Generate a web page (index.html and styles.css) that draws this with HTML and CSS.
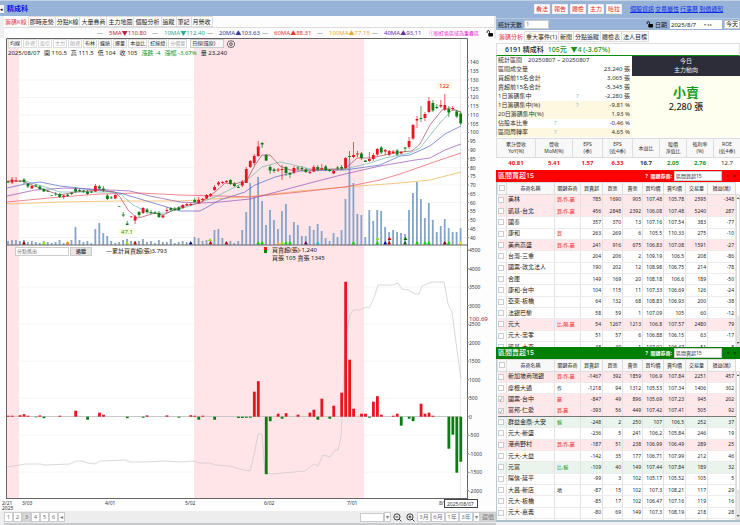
FILE: index.html
```html
<!DOCTYPE html>
<html lang="zh-Hant">
<head>
<meta charset="utf-8">
<meta name="viewport" content="width=device-width">
<title>精成科</title>
<link rel="stylesheet" href="styles.css">
</head>
<body>
<div class="app">
  <main class="left">
    <header class="titlebar"><span class="collapse">◂</span><h1>精成科</h1></header>
    <nav class="tabs">
      <a class="active" href="#k">籌碼K線</a><a href="#t">即時走勢</a><a href="#b">分點K線</a><a href="#q">大量券商</a><a href="#m">主力地圖</a><a href="#a">個股分析</a><a href="#f">追蹤</a><a href="#n">筆記</a><a href="#r">月營收</a>
    </nav>
    <div class="legend">
      <div class="ma">
        <span class="m5"><i>—</i>5MA▼110.80</span>
        <span class="m10"><i>—</i>10MA▼112.40</span>
        <span class="m20"><i>—</i>20MA▲103.63</span>
        <span class="m60"><i>—</i>60MA▲88.31</span>
        <span class="m100"><i>—</i>100MA▲77.15</span>
        <span class="m40"><i>—</i>40MA▲93.11</span>
      </div>
      <span class="hint">ⓘ粉紅色區域為重疊區</span>
      <svg class="lock" viewBox="0 0 12 12"><path d="M2 5V3a2 2 0 0 1 4 0v2" fill="none" stroke="#000" stroke-width="1.5"/><rect x="4" y="5" width="8" height="6" rx="1"/></svg>
    </div>
    <section class="chart">
      <svg id="plot" viewBox="0 38 496 473" role="img" aria-label="K線圖"></svg>
      <div class="toolbar">
        <button>均線</button><button class="off">外資</button><button class="off">投信</button><button class="off">主力</button><button class="off">融資</button><button>布林</button><button>纏繞</button><button>爆量</button><button>本益比</button><button>紅綠燈</button><button class="off">分價量</button>
        <select aria-label="週期"><option>日線(還原)</option></select>
        <svg class="gear" viewBox="0 0 16 16"><path d="M8 1l2 1.5 2.5-.3 1 2.3 2 1.5-.8 2.3.8 2.2-2 1.5-1 2.3-2.5-.3L8 15.5 6 14l-2.5.3-1-2.3-2-1.5.8-2.2L.5 6l2-1.5 1-2.3 2.5.3z" fill="none" stroke="#222" stroke-width="1.3"/><circle cx="8" cy="8.2" r="2.7" fill="none" stroke="#222" stroke-width="1.5"/></svg>
      </div>
      <p class="quote"><span>2025/08/07</span> <span>開 110.5</span> <span>高 111.5</span> <span>低 104</span> <span>收 105</span> <span class="down">漲跌 -4</span> <span class="down">漲幅 -3.67%</span> <span>量 23,240</span></p>
      <div class="subbar">
        <select aria-label="指標"><option>分點進出</option></select><button>追蹤</button>
        <span class="cum">—累計買賣超(張)3,793</span>
      </div>
      <div class="net"><i></i><p>買賣超(張)-1,240<br>買張 105 賣張 1345</p></div>
    </section>
    <footer class="bottombar">
      <div class="pages"><button>1</button><button>2</button><button class="on">3</button><button>4</button><button>5</button><button>6</button><button>◂</button></div>
      <div class="range">
        <input type="text" aria-label="範圍"><button>▾</button>
        <svg viewBox="0 0 16 16"><circle cx="7" cy="7" r="5.5"/><path d="M11 11l4 4M4.5 7h5"/></svg>
        <svg viewBox="0 0 16 16"><circle cx="7" cy="7" r="5.5"/><path d="M11 11l4 4M4.5 7h5M7 4.5v5"/></svg>
        <button>3月</button><button>6月</button><button>1年</button><button>3年</button><button>▾</button><button class="on">還價</button>
      </div>
    </footer>
  </main>
  <aside class="right">
    <header class="quick">
      <button>看法</button><button>報告</button><button>體檢</button><button>主力</button><button>哈拉</button>
      <nav><a href="#i">個股資訊</a><a href="#x">交易屬性</a><a href="#c">行事曆</a><a href="#p">到價通知</a></nav>
    </header>
    <div class="days">
      <label for="days">統計天數</label><select id="days"><option>1</option></select>
      <svg class="lock" viewBox="0 0 12 12"><path d="M2 5V3a2 2 0 0 1 4 0v2" fill="none" stroke="#000" stroke-width="1.5"/><rect x="4" y="5" width="8" height="6" rx="1"/></svg>
      <label for="date">日期</label><input id="date" type="text" value="2025/8/7"><span class="steps">▾ ◂ ▸</span><button>今天</button>
    </div>
    <nav class="tabs rtabs"><a class="active" href="#s">籌碼分析</a><a href="#e">重大事件(1)</a><a href="#w">新聞</a><a href="#z">分點追蹤</a><a href="#h">體檢表</a><a href="#l">法人目標</a></nav>
    <h2 class="stock">6191 精成科 <span>105元</span> <span>▼4 (-3.67%)</span></h2>
    <div class="summary">
      <dl>
        <div><dt>統計區間</dt><dd class="period">20250807 ~ 20250807</dd></div>
        <div><dt>區間成交量</dt><dd>23,240 張</dd></div>
        <div><dt>買超前15名合計</dt><dd>3,065 張</dd></div>
        <div><dt>賣超前15名合計</dt><dd>-5,345 張</dd></div>
        <div><dt>1日籌碼集中</dt><b>?</b><dd>-2,280 張</dd></div>
        <div class="hl"><dt>1日籌碼集中(%)</dt><b>?</b><dd>-9.81 %</dd></div>
        <div class="hl"><dt>20日籌碼集中(%)</dt><dd>1.93 %</dd></div>
        <div><dt>佔股本比重</dt><b class="near">?</b><dd>-0.46 %</dd></div>
        <div class="hl"><dt>區間周轉率</dt><b class="near">?</b><dd>4.65 %</dd></div>
      </dl>
      <div class="trend">
        <p class="cap">今日<br>主力動向</p>
        <p class="big">小賣</p><p class="amt">2,280 張</p>
      </div>
    </div>
    <table class="ratios">
      <colgroup><col class="r1"><col class="r2"><col class="r3"><col class="r3"><col class="r4"><col class="r4"><col class="r4"><col class="r4"></colgroup>
      <thead><tr><th>累計營收<br>YoY(%)</th><th>營收<br>MoM(%)</th><th>EPS<br>(季)</th><th>EPS<br>(近4季)</th><th>本益比</th><th>股價<br>淨值比</th><th>殖利率<br>(%)</th><th>ROE<br>(近4季)</th></tr></thead>
      <tbody><tr><td class="up">40.81</td><td class="up">5.41</td><td class="up">1.57</td><td class="up">6.33</td><td>16.7</td><td class="down">2.05</td><td class="down">2.76</td><td class="plain">12.7</td></tr></tbody>
    </table>
    <section class="brokers buy">
      <header><h3>區間買超15</h3><label for="kb">?&nbsp; 關鍵券商:</label><select id="kb"><option>區間買超15</option></select><span class="tail">▪ ▾</span></header>
      <div class="scroll"><table id="buy"></table><div class="bar"><i>▴</i><i>▾</i></div></div>
    </section>
    <section class="brokers sell">
      <header><h3>區間賣超15</h3><label for="ks">?&nbsp; 關鍵券商:</label><select id="ks"><option>區間賣超15</option></select><span class="tail">▪ ▾</span></header>
      <div class="scroll"><table id="sell"></table><div class="bar"><i>▴</i><i>▾</i></div></div>
    </section>
  </aside>
</div>
<script src="app.js"></script>
</body>
</html>
```
FILE: styles.css
```css
* { box-sizing: border-box; margin: 0; padding: 0; }
body {
  font: 6px/8px "Noto Sans", "Noto Sans CJK TC", sans-serif;
  color: #333; background: #fff;
}
button, select, input { font: inherit; color: inherit; appearance: none; border: 1px solid #ccc; border-radius: 0; background: #fff; min-width: 0; }
a { color: inherit; text-decoration: none; }
i { font-style: normal; }
.app { display: grid; grid-template-columns: 496fr 244fr; align-items: start; background: #eef0f3; min-height: 100vh; }
.left { background: #fdfdfd; border-left: 4px solid #eeeff1; border-right: 2px solid #e4e8ec; min-width: 0; }
.titlebar { height: 16px; margin-left: -4px; margin-right: -2px; background: #98b3d8; border-top: 1px solid #c4d1e2; display: flex; align-items: center; }
.titlebar h1 { font-size: 7px; line-height: 14px; color: #0a14e6; }
.collapse { width: 4px; margin-right: 3px; background: #f4f6fa; font-size: 5px; color: #000; }
.tabs { display: flex; height: 11px; }
.tabs a { padding: 1px; border: 1px solid #ddd; border-left: 0; line-height: 9px; color: #222; background: #fdfdfd; white-space: nowrap; }
.tabs .active { color: #e23c3c; border-top-color: transparent; border-bottom-color: transparent; }
.legend { display: flex; align-items: center; height: 11px; border-top: 1px solid #ddd; padding-left: 93px; white-space: nowrap; }
.ma { display: grid; grid-template-columns: repeat(6, 55px); flex: none; }
.ma i { display: inline-block; width: 12px; color: #777; }
.m5 { color: #b8243c; } .m10 { color: #27ae94; } .m20 { color: #2b3fa0; }
.m60 { color: #ee3535; } .m100 { color: #eba92f; } .m40 { color: #6b2c97; }
.hint { color: #e31ccd; font-size: 5px; margin-left: 2px; margin-right: auto; }
.lock { width: 7px; height: 7px; flex: none; margin-right: 1px; }
.chart { position: relative; margin-left: -4px; margin-right: -2px; }
#plot { display: block; width: 100%; height: auto; }
.toolbar { position: absolute; top: 0; left: 8px; display: flex; align-items: center; gap: 1px; height: 11px; font-size: 5px; }
.toolbar button { padding: 0 1px; height: 9px; line-height: 7px; border-color: #ddd; color: #222; }
.toolbar .off { color: #aaa; }
.toolbar select { width: 34px; height: 9px; line-height: 7px; margin: 0 2px; padding: 0 1px; background: #f7f7f7; }
.gear { width: 8px; height: 8px; }
.quote { position: absolute; top: 11px; left: 8px; display: flex; gap: 4px; color: #222; white-space: nowrap; }
.down { color: #159415; } .up { color: #ee1616; }
.subbar { position: absolute; top: 209px; left: 15px; display: flex; gap: 1px; white-space: nowrap; }
.subbar select { width: 54px; height: 9px; line-height: 7px; font-size: 5px; padding-left: 1px; color: #777; }
.subbar button { width: 22px; height: 9px; line-height: 7px; font-size: 5px; font-weight: bold; background: #e6e6e6; }
.cum { margin-left: 13px; color: #222; }
.net { position: absolute; top: 208px; left: 264px; display: flex; gap: 5px; color: #222; white-space: nowrap; }
.net i { width: 3px; height: 6px; margin-top: 1px; background: linear-gradient(#e21 50%, #080 50%); }
.axis { font-size: 6px; fill: #333; }
.bottombar { display: flex; justify-content: space-between; height: 14px; margin-right: -2px; padding: 1px 0; background: #ededed; border-bottom: 2px solid #c8cacc; }
.pages, .range { display: flex; align-items: center; }
.bottombar button { height: 10px; line-height: 8px; padding: 0 1px; color: #777; min-width: 9px; }
.range button { min-width: 14px; }
.bottombar .pages button:last-child, .range input + button, .range button:nth-of-type(6) { min-width: 6px; }
.bottombar .on { background: #d7d7d7; }
.range input { width: 24px; height: 9px; }
.range svg { width: 9px; height: 9px; margin: 0 2px; fill: none; stroke: #222; stroke-width: 1.5; }

.right { min-width: 0; background: #fff; }
.quick { display: flex; align-items: center; height: 18px; padding: 0 0 2px 38px; gap: 2px; background: #98b3d8; border-top: 1px solid #c4d1e2; }
.quick button { padding: 0 1px; height: 10px; line-height: 8px; color: #dc2626; border-color: #eee; }
.quick nav { display: flex; gap: 1px; margin-left: 6px; color: #0b2bea; white-space: nowrap; }
.quick a { text-decoration: underline; }
.days { display: flex; align-items: center; height: 12px; padding: 0 0 0 2px; background: #98b3d8; color: #222; border-top: 1px solid #b7c9e2; }
.days select { width: 25px; height: 9px; line-height: 7px; margin: 0 auto 0 2px; padding-left: 1px; color: #666; }
.days input { width: 34px; height: 9px; margin-left: 3px; padding-left: 1px; border: 0; }
.days .lock { margin-right: 2px; }
.steps { height: 9px; width: 18px; background: #fff; font-size: 4px; line-height: 9px; color: #666; }
.days button { height: 9px; line-height: 7px; margin-left: 2px; padding: 0 1px; }
.rtabs { margin: 1px 0 1px 2px; }
.stock { height: 13px; padding-left: 8px; font-size: 7px; line-height: 11px; font-weight: 500; color: #222; border: 1px solid #ddd; border-bottom: 1px solid #0a8c14; }
.stock span { color: #159415; margin-left: 2px; }
.summary { display: grid; grid-template-columns: 136fr 108fr; }
dl { border-left: 1px solid #ccc; }
dl div { display: flex; height: 9px; line-height: 9px; padding: 0 2px 0 1px; white-space: nowrap; position: relative; }
dl dd { margin-left: auto; }
dl .period { margin: 0 auto 0 6px; }
dl .hl { background: #fff8e0; }
dl b { position: absolute; left: 79px; color: #8fb3cf; font-weight: normal; }
dl .near { left: 57px; }
.trend { background: #fffff0; text-align: center; }
.cap { background: #2d2c39; color: #eee; line-height: 9px; padding: 1px 0; }
.big { margin-top: 8px; font-size: 13px; line-height: 16px; font-weight: bold; color: #149a1c; }
.amt { font-size: 9px; line-height: 12px; margin-top: 1px; font-weight: 500; color: #222; }
table { width: 100%; table-layout: fixed; border-collapse: collapse; }
.ratios { margin-top: 1px; }
.ratios th { height: 19px; font-size: 5px; line-height: 7px; font-weight: normal; background: #f8f8f8; border: 1px solid #ddd; white-space: nowrap; }
.ratios td { height: 11px; text-align: center; font-weight: bold; line-height: 8px; }
.ratios .plain { font-weight: normal; }
.r1 { width: 39px; } .r2 { width: 37px; } .r3 { width: 30px; } .r4 { width: 27px; }
.brokers header { display: flex; align-items: center; height: 12px; padding: 0 2px; color: #fff; background: #f00; }
.buy { margin-top: 1px; }
.sell header { background: #008000; }
.brokers h3 { font-size: 7px; font-weight: 500; margin-right: auto; }
.brokers label { font-weight: bold; font-size: 5px; margin-right: 2px; }
.brokers select { width: 48px; height: 10px; line-height: 8px; font-size: 5px; padding-left: 1px; color: #333; }
.tail { width: 16px; padding-left: 3px; color: #a00000; }
.sell .tail { color: #034d03; }
.scroll { display: flex; height: 165px; overflow: hidden; border-left: 1px solid #b7c9d3; }
.sell .scroll { height: 163px; border-bottom: 2px solid #a9bfca; }
.scroll table { height: 172px; flex: 1; min-width: 0; font-size: 5px; line-height: 7px; color: #222; }
.scroll th { height: 12px; font-weight: normal; border: 1px solid #ddd; background: #f8f8f8; white-space: nowrap; }
.scroll td { border-right: 1px solid #e2e2e2; border-bottom: 1px solid #ececec; text-align: right; white-space: nowrap; padding-right: 1px; }
.scroll td:nth-child(2), .scroll td:nth-child(3) { text-align: left; padding-left: 2px; }
.scroll td:nth-child(2) { font-size: 6px; padding-left: 1px; }
.scroll .pink td { background: #ffe7ea; }
.scroll .green td { background: #e9f5ec; }
.scroll .focus td { border-top: 1px solid #777; border-bottom: 1px solid #777; }
.scroll td.up { color: #ee1616; }
.scroll td.up2 { color: #159415; }
.scroll input { display: block; width: 6px; height: 6px; margin: 0 auto; border: 1px solid #ccc; background: #fff; }
.scroll input:checked::before { content: "✓"; display: block; font-size: 5px; line-height: 4px; color: #444; }
.bar { width: 6px; margin-top: 12px; display: flex; flex-direction: column; justify-content: space-between; background: linear-gradient(#fff 80%, #e8e8e8 80%); border: 1px solid #ddd; font-size: 4px; line-height: 6px; text-align: center; }
.c0 { width: 9px; } .c1 { width: 48px; } .c2 { width: 26px; } .c3 { width: 22px; } .c4 { width: 20px; } .c5 { width: 20px; } .c6 { width: 21px; } .c7 { width: 22px; } .c8 { width: 22px; } .c9 { width: 28px; }
```
FILE: app.js
```js
const X = i => 8.1 + 3.97 * i;
// colour, high, body top, body bottom, low
const candles = `g181 181.5 182.5 183|r177 179.5 182.5 184|r177 180.5 181.5 182|g180.5 180.8 181.5 182|g178 179.5 182 184|g183 184 186.5 188|r185 186 188.5 189|g184 185.5 186.5 187|g185 186.5 189 190|g188 189 191.5 192|g190 190.8 191.5 192|g195 195.2 195.7 196|g192 194 194.5 196|g193 194 197 198|r195 195.5 197 199|g194 194.7 196 197|g192 193 194 195|g187 189 191.5 193|g189 190 191 192|g190 190.5 191.5 193|g190 191.5 194 195|g191 191.5 192.5 193|r184 186 191.5 192|g185 186.5 188.5 190|g186 188.5 190 192|g194 195.5 199 200|g196 197.5 198.3 199|r194 195 198.5 199|g206 206 206.5 207|g212 214.5 215.5 217|g221 223.5 225 225|r216 216.5 217 218|r215 216.5 220.5 224|g211 212 215 217|r207 208 213 214|g208 209.5 212 214|g210 212 213 214|g211 212.5 213.5 214|g211 213 217 218|r215 215.5 217.5 218|r207 210 211 213|g207 208 210 211|g207 208.5 210 211|g206 207.5 210 211|r204 205 208 209|r203 204 205 206|r203 204 205 206|g198 200 202 203|r197 200 203 204|r198 199 200 202|r194 195 198.5 199|r193 194 195.5 197|r185 187 190 191|r181 182.5 184.5 186|r181 182 183 184|r180 181 182 183|g179 180 184 185|g182 183.5 186 187|g185 187 188 188|r180 182 185.5 187|r167 169 183 183|r160 161 167 168|r154 156 163 165|r141 146.5 156 157|g142 143 144.5 148|g154 155 160.5 161|g165 167 170.5 174|g168 169.5 171 173|r168 169.5 170.5 172|r165 169 170 180|g166 167 173 176|g172 173 174.5 178|r166 168 172.5 174|g166 167.5 168.5 170|g166 168 169 171|g168 169.5 172 173|r171 172 173 174|r165 167 171.5 172|g165 167 169.5 171|r164 168 169 170|g165 166.5 170 171|g169 170 171 172|r170 171 173.5 174|g166 167.5 168.5 170|g165 167 168.5 170|r157 158 168 169|g151 156 157 160|r142 155 157 158|r151 153.5 154.5 157|g152 153.5 158 160|g160 160.5 162 162|r152 159 161 162|r153 155 159 161|r148 149 154.5 156|g146 147.5 152.5 154|r149 150 151.5 155|r150 151 154.5 156|r150 151.5 153 154|g149 150.5 154.5 156|r151 152 153.5 154|g147 147.5 148.5 152|r137 141 147 149|r124 125 138.5 140|r116 119 120.5 128|g106 118 119 122|r112 114 118 121|r97 101 112 113|g100 103 110.5 112|g104 107 108 109|r100 105 106.5 108|r94 105 109.5 111|g106 109 112.5 117|r106 108 109 111|g110 111.5 116.5 118|g112 113.5 123.5 125`.split('|');
const volume = [4,5,5,4,5,3,4,3,2,4,3,2,3,5,2,3,5,18,5,3,4,2,16,22,12,9,4,2,3,5,6,4,4,4,6,3,4,2,5,3,3,6,2,3,4,3,2,8,7,4,5,5,15,16,7,3,4,2,4,15,33,62,48,68,44,20,35,25,16,34,41,10,23,20,9,9,19,15,21,14,7,4,12,8,15,46,85,62,31,30,8,35,24,35,34,18,13,15,13,12,11,35,52,63,46,27,42,25,13,19,26,17,13,13,17];
const net = {0:1,1:1,3:1.5,4:2.5,5:1,7:-.6,8:1.3,9:-1.5,13:1,17:6,20:-3,23:4,24:2,30:-1.5,34:-1,35:1.3,40:1.3,43:-1,46:1.5,47:1,48:-3,49:1,52:-3,58:-1.3,59:-1.3,60:-1,61:-1,62:25,63:35.5,65:-57.5,66:-4.5,68:3,69:-2,70:3.5,73:2,76:4,77:7,78:-3,79:18,81:-2,82:11,84:24,85:135,86:57,87:8,89:3,90:3,91:-1,92:15,93:20.5,94:2,97:1,98:3,99:-9,101:-2,102:-4.5,104:13,105:3,106:4,107:1,111:-32,112:-18,113:-56,114:-45};
const lines = [
 ['#efb04e','7,204 60,202 120,201 180,201 245,197 300,191 345,187 400,183 430,180 461,172'],
 ['#ee5560','7,202 60,197 100,194 140,193 180,195 220,196 250,197 300,192 345,187 380,180 400,174 420,167 440,160 461,153'],
 ['#9650b4','7,196 35,190 65,188 110,190 130,191 150,196 180,202 200,203 220,202 250,199 280,191 310,183 345,174 380,166 415,160 430,158 445,150 461,144'],
 ['#5566c8','7,188 25,184 40,182 60,186 105,191 120,193 150,202 180,211 200,211 220,200 245,192 255,185 275,177 300,171 345,170 380,165 400,156 410,155 430,146 445,134 461,126'],
 ['#67b8ae','25,181 45,187 60,192 80,192 110,192 122,195 133,205 150,213 165,213 190,206 215,197 235,187 245,182 262,167 280,162 290,164 310,169 345,169 370,163 385,158 410,153 420,148 440,123 452,110 461,112'],
 ['#a8485a','7,181 22,181 32,185 45,190 60,195 75,192 100,190 115,192 120,197 128,210 137,218 142,217 155,213 163,215 180,207 200,203 215,192 225,183 235,184 247,180 255,165 262,155 270,155 280,166 290,170 305,170 345,169 357,158 370,158 385,155 400,152 412,151 420,144 430,125 442,110 450,108 461,112'],
 ['#c9c9c9','7,467 20,465 25,464 40,464 45,465 70,464 76,461 82,461 88,463 95,464 100,461 125,460 130,462 145,462 165,461 180,462 193,461 200,463 210,463 215,465 230,466 240,469 250,471 254,455 258,434 262,434 265,473 272,474 305,471 314,464 318,466 323,455 330,457 335,450 338,450 341,437 343,395 345,345 347,330 350,315 353,310 360,310 366,307 369,308 374,298 378,285 393,285 398,283 402,289 408,290 415,294 419,294 422,286 432,282 444,282 448,304 452,312 457,350 461,379']
];
const marks = {4:'#900',9:'#8e0',15:'#f80',30:'#8e0',32:'#c00',46:'#009',51:'#c00',55:'#c00',63:'#0d0',64:'#0d0',68:'#fa5',69:'#8e0',70:'#0d0',71:'#0d0',75:'#506',78:'#0cd',87:'#0d0',93:'#0d0',95:'#009',96:'#c00',100:'#060',103:'#0d0',105:'#0d0',106:'#0d0',110:'#800',111:'#0d0',114:'#de0'};
const rect = (x, y, w, h, f) => `<rect x="${x}" y="${y}" width="${w}" height="${h}" fill="${f}"/>`;
const seg = (x1, y1, x2, y2, c) => `<path d="M${x1} ${y1}L${x2} ${y2}" stroke="${c}"/>`;
const text = (x, y, s, extra = '') => `<text class="axis" x="${x}" y="${y}" ${extra}>${s}</text>`;

let s = rect(0, 38, 496, 473, '#fdfdfd') + rect(7, 38, 460, 460, '#fff') + rect(7, 38, 12, 460, '#ffe4e8') + rect(194, 38, 170, 460, '#ffe4e8');
for (let y = 80; y < 240; y += 17.5) s += seg(19, y, 194, y, '#f5f5f5') + seg(364, y, 467, y, '#f5f5f5');
for (let k = -3; k < 9; k += 2) { const y = 416.7 - k * 18.5; s += seg(19, y, 194, y, '#f6f6f6') + seg(364, y, 467, y, '#f6f6f6'); }
s += seg(460.5, 38, 460.5, 498, '#e8e8e8') + seg(7, 416.5, 461, 416.5, '#c8c8c8');
volume.forEach((v, i) => s += rect(X(i) - 1, 245 - v, 1.8, v, '#84a5c8'));
lines.forEach(([c, p]) => s += `<polyline points="${p}" fill="none" stroke="${c}" stroke-width=".7"/>`);
candles.forEach((row, i) => {
  const c = row[0] === 'g' ? '#0a7d14' : '#e81420', [h, t, b, l] = row.slice(1).split(' ').map(Number);
  s += `<path d="M${X(i)} ${h}V${l}" stroke="${c}" stroke-width=".7"/>` + rect(X(i) - 1.4, t, 2.8, b - t, c);
});
for (const i in marks) s += `<path d="M${X(+i) - 2} 244.5l2-3.5 2 3.5z" fill="${marks[i]}"/>`;
s += '<path d="M208 241l2-3 2 3zM375.5 240l2-3 2 3z" fill="#8d2"/><path d="M387.500 240l2-3 2 3z" fill="#c00"/><path d="M403.500 240l2-3 2 3z" fill="#060"/>';
for (const i in net) s += rect(X(+i) - 1.3, net[i] > 0 ? 416.7 - net[i] : 416.7, 2.8, Math.abs(net[i]), net[i] > 0 ? '#e81420' : '#087d12');
s += '<path d="M6.5 498V38.5H467.5V498M6 245H467.5M6 498.5H468" fill="none" stroke="#666"/>';
for (let p = 40; p <= 140; p += 5) { const y = 62.3 + (140 - p) * 1.754; s += seg(467, y, 469, y, '#888') + text(470, y + 2, p, 'style="font-size:5px"'); }
for (let v = -2000; v <= 4500; v += 500) { const y = 416.7 - v * .037; s += seg(467, y, 469, y, '#888') + text(469, y + 2, v, 'style="font-size:5px"'); }
s += rect(469, 314, 24, 8, '#fdfdfd') + text(469, 321, '100.69', 'style="fill:#a8182e"');
s += rect(436, 82, 16, 7, '#fff6e4') + text(439, 88, '122', 'style="fill:#e02020"');
s += rect(119, 228, 16, 7, '#f6ffe0') + text(121, 234, '47.1', 'style="fill:#3b8c1c"');
[[2,'2/21'],[22,'3/03'],[105,'4/01'],[185,'5/02'],[264,'6/02'],[347,'7/01'],[439,'8/']].forEach(([x, t]) => s += text(x, 505, t, 'style="font-size:5px"'));
s += text(2, 510, '2025', 'style="font-size:5px"') + '<rect x="444.5" y="499.5" width="33" height="8" fill="#fff" stroke="#444"/>' + text(447, 506, '2025/08/07', 'style="font-size:5px"');
document.getElementById('plot').innerHTML = s;

const head = ['券商名稱','關鍵券商','買賣超','買張','賣張','買均價','賣均價','交易量','損益(萬)'];
// style flags: p pink, g green, c checked, f focused; then the columns
const buy = `p|美林|買,作,贏|785|1690|905|107.48|105.78|2595|-348
p|凱基-台北|買,作,贏|456|2848|2392|106.08|107.48|5240|287
|國泰||357|370|13|107.16|107.54|383|-77
|康和|買|263|269|6|105.5|110.33|275|-10
p|美商高盛|買,作,贏|241|916|675|106.83|107.08|1591|-27
|台灣-三重||204|206|2|109.19|106.5|208|-86
|國票-敦北法人||190|202|12|108.98|106.75|214|-78
|合庫||149|169|20|108.18|106.6|189|-50
|康和-台中||104|115|11|107.33|106.69|126|-24
|亞東-板橋||64|132|68|108.83|106.93|200|-38
|法銀巴黎||58|59|1|107.09|105|60|-12
p|元大|比,隔,贏|54|1267|1213|106.8|107.57|2480|79
|元大-忠孝||51|57|6|106.88|106.15|63|-17
|凱基-大直||48|49|1|107.02|106.47|51|-8`;
const sell = `p|新加坡商瑞銀|買,作,贏|-1467|392|1859|106.9|107.84|2251|457
|摩根大通|作|-1218|94|1312|105.53|107.34|1406|302
pc|國票-台中|贏|-847|49|896|105.69|107.23|945|202
pcf|富邦-仁愛|買,贏|-393|56|449|107.42|107.41|505|92
g|群益金鼎-大安|輸|-248|2|250|107|106.5|252|37
|元大-新盛||-236|5|241|106.2|105.84|246|19
p|港商野村|買,作,贏|-187|51|238|106.99|106.49|289|25
|元大-大益||-142|35|177|106.71|107.99|212|46
g|元富|比,輸|-109|40|149|107.44|107.84|189|32
|陽信-延平||-99|3|102|105.17|105.52|105|5
|大昌-新店|地|-87|15|102|107.3|108.21|117|29
|元大-板橋||-85|17|102|106.47|107.16|119|16
|元大-嘉義||-80|69|149|107.3|108.19|218|28
|國泰-館前||-78|12|90|106.9|107.4|102|14`;
function fill(id, data) {
  const rows = data.split('\n').map(line => {
    const [f, ...c] = line.split('|');
    const cls = [f.includes('p') && 'pink', f.includes('g') && 'green', f.includes('f') && 'focus'].filter(Boolean).join(' ');
    const key = f.includes('g') ? 'up2' : f.includes('p') || c[1] === '買' ? 'up' : '';
    return `<tr class="${cls}"><td><input type="checkbox" aria-label="${c[0]}"${f.includes('c') ? ' checked' : ''}></td>` +
      c.map((t, i) => `<td${i === 1 ? ` class="${key}"` : ''}>${t}</td>`).join('') + '</tr>';
  }).join('');
  document.getElementById(id).innerHTML = '<colgroup>' + [...Array(10).keys()].map(i => `<col class="c${i}">`).join('') +
    '</colgroup><thead><tr><th><input type="checkbox" aria-label="全選"></th>' + head.map(h => `<th>${h}</th>`).join('') + `</tr></thead><tbody>${rows}</tbody>`;
}
fill('buy', buy);
fill('sell', sell);
```
